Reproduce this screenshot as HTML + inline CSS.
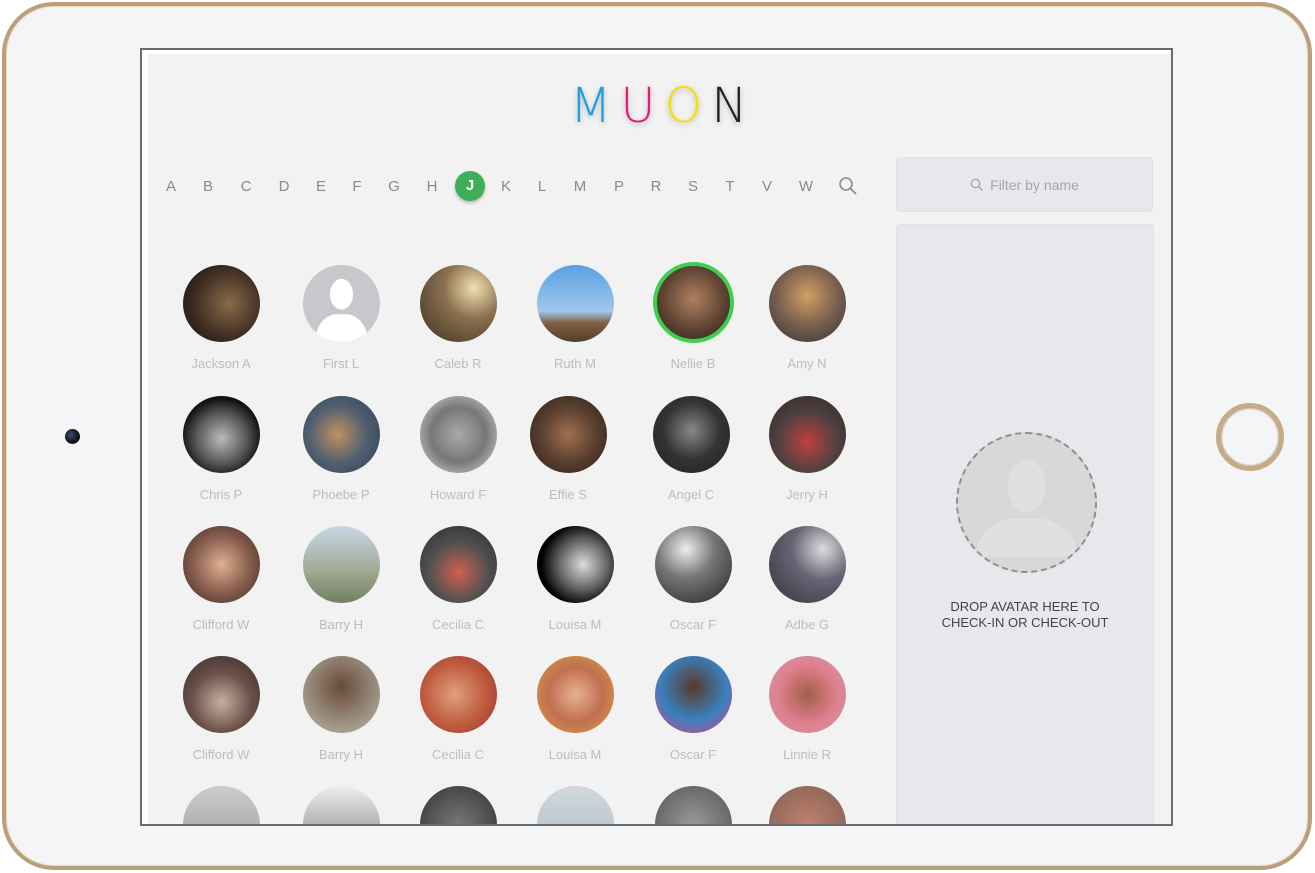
<!DOCTYPE html>
<html><head><meta charset="utf-8"><style>
*{margin:0;padding:0;box-sizing:border-box}
body{width:1315px;height:873px;background:#fff;position:relative;overflow:hidden;font-family:"Liberation Sans",sans-serif}
.frame{position:absolute;left:2px;top:2px;width:1310px;height:868px;border-radius:52px;border:4px solid #b9a07a;background:#f4f5f7;box-shadow:inset 0 0 0 1px #e9dcc4}
.screen{position:absolute;left:140px;top:48px;width:1033px;height:778px;border:2px solid #6b6b6b;background:#fff;overflow:hidden}
.content{position:absolute;left:6px;top:4px;right:0;bottom:0;background:#f2f2f2}
.cam{position:absolute;left:65px;top:429px;width:15px;height:15px;border-radius:50%;background:radial-gradient(circle at 40% 40%,#3a4a7a,#111 60%)}
.home{position:absolute;left:1216px;top:403px;width:68px;height:68px;border-radius:50%;border:5px solid #c7ab85;box-shadow:inset 0 0 2px #7a6040}
.logo{position:absolute;left:570px;top:78px;font-size:48px;letter-spacing:9px;font-family:"DejaVu Sans","Liberation Sans",sans-serif;font-weight:200;text-shadow:0 2px 6px rgba(0,0,0,.25)}
.ltr{position:absolute;top:178px;font-size:15px;color:#8a8a8a;transform:translateX(-50%)}
.j{position:absolute;left:455px;top:171px;width:30px;height:30px;border-radius:50%;background:#3eaf58;color:#fff;font-size:15px;font-weight:bold;text-align:center;line-height:30px;box-shadow:0 2px 3px rgba(0,0,0,.25)}
.av{position:absolute;width:77px;height:77px;border-radius:50%}
.nm{position:absolute;width:120px;text-align:center;font-size:13px;color:#bdbdbd}
.filter{position:absolute;left:896px;top:157px;width:257px;height:55px;border-radius:4px;background:#e8e8ec;border:1px solid #e2e2e6;color:#a5a5aa;font-size:14px;text-align:center;line-height:55px}
.drop{position:absolute;left:896px;top:224px;width:258px;height:600px;border-radius:4px 4px 0 0;background:#e8e8ec;border:1px solid #e2e2e6;border-bottom:none}
.dc{position:absolute;left:956px;top:432px;width:141px;height:141px;border-radius:50%;border:2px dashed #8f8f8f;background:#d8d8d8;overflow:hidden}
.dt{position:absolute;left:896px;top:599px;width:258px;text-align:center;font-size:13px;color:#444;line-height:16px}
</style></head><body>
<div class="frame"></div>
<div class="cam"></div>
<div class="home"></div>
<div class="screen"><div class="content"></div></div>
<div class="logo"><span style="color:#1aa4dd">M</span><span style="color:#e5197a">U</span><span style="color:#f4e000">O</span><span style="color:#222">N</span></div>

<span class="ltr" style="left:171px">A</span><span class="ltr" style="left:208px">B</span><span class="ltr" style="left:246px">C</span><span class="ltr" style="left:284px">D</span><span class="ltr" style="left:321px">E</span><span class="ltr" style="left:357px">F</span><span class="ltr" style="left:394px">G</span><span class="ltr" style="left:432px">H</span>
<div class="j">J</div>
<span class="ltr" style="left:506px">K</span><span class="ltr" style="left:542px">L</span><span class="ltr" style="left:580px">M</span><span class="ltr" style="left:619px">P</span><span class="ltr" style="left:656px">R</span><span class="ltr" style="left:693px">S</span><span class="ltr" style="left:730px">T</span><span class="ltr" style="left:767px">V</span><span class="ltr" style="left:806px">W</span>
<svg style="position:absolute;left:838px;top:176px" width="20" height="20" viewBox="0 0 20 20"><circle cx="8" cy="8" r="6" fill="none" stroke="#8a8a8a" stroke-width="1.6"/><line x1="12.5" y1="12.5" x2="18" y2="18" stroke="#8a8a8a" stroke-width="1.8"/></svg>

<div class="av" style="left:183px;top:265px;background:radial-gradient(circle at 60% 50%,#8a6a4a,#3a2a20 60%,#1a1410)"></div>
<div class="av" style="left:303px;top:265px;background:#c8c8cc;overflow:hidden"><svg width="77" height="77" viewBox="0 0 100 100"><ellipse cx="50" cy="38" rx="15" ry="20" fill="#fff"/><path d="M15 100 Q18 70 40 64 L60 64 Q82 70 85 100Z" fill="#fff"/></svg></div>
<div class="av" style="left:420px;top:265px;background:radial-gradient(circle at 70% 30%,#f0e0b0,#8a7050 40%,#3a3020)"></div>
<div class="av" style="left:537px;top:265px;background:linear-gradient(#5aa0e0,#a0c8ee 60%,#806040 75%,#504030)"></div>
<div class="av" style="left:653px;top:262px;width:81px;height:81px;border:4px solid #3fcf50;background:radial-gradient(circle at 50% 45%,#b08060,#5a4030 60%,#2a2018)"></div>
<div class="av" style="left:769px;top:265px;background:radial-gradient(circle at 50% 40%,#d0a060,#7a6050 50%,#303030)"></div>
<div class="av" style="left:183px;top:396px;background:radial-gradient(circle at 50% 55%,#bbb,#555 45%,#111 70%)"></div>
<div class="av" style="left:303px;top:396px;background:radial-gradient(circle at 45% 50%,#c09060,#506070 50%,#304050)"></div>
<div class="av" style="left:420px;top:396px;background:radial-gradient(circle,#aaa,#777 50%,#ddd)"></div>
<div class="av" style="left:530px;top:396px;background:radial-gradient(circle at 50% 50%,#a07050,#5a4030 50%,#2a2018)"></div>
<div class="av" style="left:653px;top:396px;background:radial-gradient(circle at 50% 45%,#888,#333 50%,#222)"></div>
<div class="av" style="left:769px;top:396px;background:radial-gradient(circle at 50% 60%,#c04040,#504040 50%,#302828)"></div>
<div class="av" style="left:183px;top:526px;background:radial-gradient(circle at 50% 50%,#e0b090,#8a6050 50%,#3a2a20)"></div>
<div class="av" style="left:303px;top:526px;background:linear-gradient(#c8d8e8,#a0a890 60%,#708060)"></div>
<div class="av" style="left:420px;top:526px;background:radial-gradient(circle at 50% 60%,#d06050,#505050 50%,#302828)"></div>
<div class="av" style="left:537px;top:526px;background:radial-gradient(circle at 60% 50%,#ddd,#666 40%,#000 70%)"></div>
<div class="av" style="left:655px;top:526px;background:radial-gradient(circle at 40% 30%,#eee,#777 40%,#222)"></div>
<div class="av" style="left:769px;top:526px;background:radial-gradient(circle at 70% 30%,#ddd,#667 40%,#333)"></div>
<div class="av" style="left:183px;top:656px;background:radial-gradient(circle at 50% 60%,#c8b0a0,#6a5048 50%,#3a2a28)"></div>
<div class="av" style="left:303px;top:656px;background:radial-gradient(circle at 50% 40%,#6a4a38,#9a9080 60%,#c0b8a0)"></div>
<div class="av" style="left:420px;top:656px;background:radial-gradient(circle at 45% 50%,#e0a080,#c06040 50%,#a03030)"></div>
<div class="av" style="left:537px;top:656px;background:radial-gradient(circle at 50% 50%,#e8b090,#c07050 50%,#e0a040)"></div>
<div class="av" style="left:655px;top:656px;background:radial-gradient(circle at 50% 40%,#5a3a28,#3a80c0 55%,#e04080)"></div>
<div class="av" style="left:769px;top:656px;background:radial-gradient(circle at 50% 50%,#a06048,#e08090 55%,#c0a0a0)"></div>
<div style="position:absolute;left:148px;top:786px;width:740px;height:38px;overflow:hidden">
<div class="av" style="left:35px;top:0;background:linear-gradient(#ccc,#999)"></div>
<div class="av" style="left:155px;top:0;background:linear-gradient(#eee,#777)"></div>
<div class="av" style="left:272px;top:0;background:radial-gradient(circle,#777,#333)"></div>
<div class="av" style="left:389px;top:0;background:linear-gradient(#d0d8e0,#b0b8c0)"></div>
<div class="av" style="left:507px;top:0;background:radial-gradient(circle,#999,#555)"></div>
<div class="av" style="left:621px;top:0;background:radial-gradient(circle,#c08070,#806050)"></div>
</div>

<div class="nm" style="left:161px;top:356px">Jackson A</div><div class="nm" style="left:281px;top:356px">First L</div><div class="nm" style="left:398px;top:356px">Caleb R</div><div class="nm" style="left:515px;top:356px">Ruth M</div><div class="nm" style="left:633px;top:356px">Nellie B</div><div class="nm" style="left:747px;top:356px">Amy N</div>
<div class="nm" style="left:161px;top:487px">Chris P</div><div class="nm" style="left:281px;top:487px">Phoebe P</div><div class="nm" style="left:398px;top:487px">Howard F</div><div class="nm" style="left:508px;top:487px">Effie S</div><div class="nm" style="left:631px;top:487px">Angel C</div><div class="nm" style="left:747px;top:487px">Jerry H</div>
<div class="nm" style="left:161px;top:617px">Clifford W</div><div class="nm" style="left:281px;top:617px">Barry H</div><div class="nm" style="left:398px;top:617px">Cecilia C</div><div class="nm" style="left:515px;top:617px">Louisa M</div><div class="nm" style="left:633px;top:617px">Oscar F</div><div class="nm" style="left:747px;top:617px">Adbe G</div>
<div class="nm" style="left:161px;top:747px">Clifford W</div><div class="nm" style="left:281px;top:747px">Barry H</div><div class="nm" style="left:398px;top:747px">Cecilia C</div><div class="nm" style="left:515px;top:747px">Louisa M</div><div class="nm" style="left:633px;top:747px">Oscar F</div><div class="nm" style="left:747px;top:747px">Linnie R</div>

<div class="filter"><svg style="vertical-align:-2px;margin-right:6px" width="14" height="14" viewBox="0 0 14 14"><circle cx="5.5" cy="5.5" r="4.2" fill="none" stroke="#a5a5aa" stroke-width="1.3"/><line x1="8.6" y1="8.6" x2="12.5" y2="12.5" stroke="#a5a5aa" stroke-width="1.4"/></svg>Filter by name</div>
<div class="drop"></div>
<div class="dc"><svg width="137" height="137" viewBox="0 0 100 100"><ellipse cx="50" cy="38" rx="14" ry="19" fill="#e0e0e0"/><path d="M12 90 Q16 66 38 62 L62 62 Q84 66 88 90Z" fill="#e0e0e0"/></svg></div>
<div class="dt">DROP AVATAR HERE TO<br>CHECK-IN OR CHECK-OUT</div>
</body></html>
